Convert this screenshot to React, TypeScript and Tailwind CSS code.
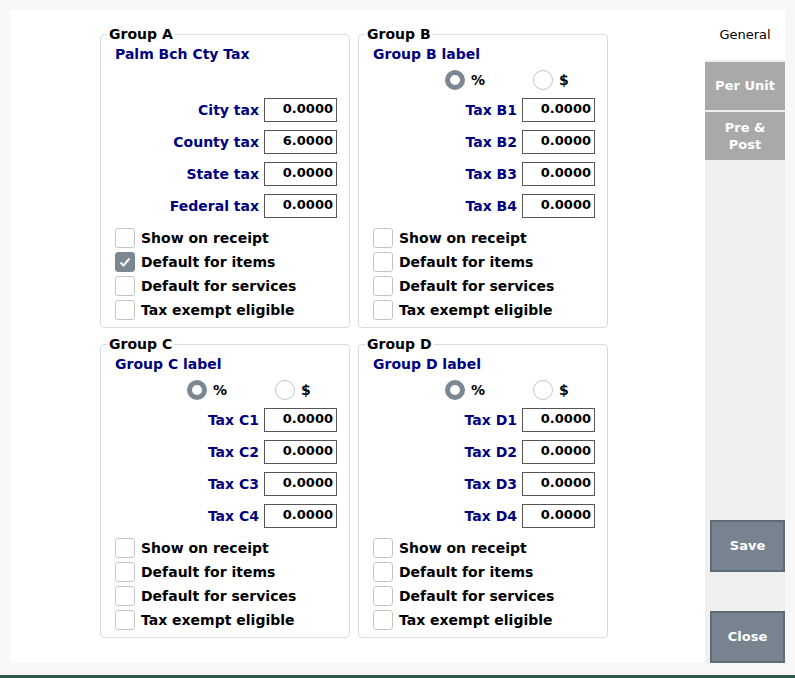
import React from "react";

const font = { fontFamily: "'DejaVu Sans', Verdana, sans-serif" };

type Group = {
  name: string;
  label: string;
  radio: boolean;
  rows: [string, string][];
  checked: boolean[];
};

const groups: Group[] = [
  {
    name: "Group A",
    label: "Palm Bch Cty Tax",
    radio: false,
    rows: [["City tax", "0.0000"], ["County tax", "6.0000"], ["State tax", "0.0000"], ["Federal tax", "0.0000"]],
    checked: [false, true, false, false],
  },
  {
    name: "Group B",
    label: "Group B label",
    radio: true,
    rows: [["Tax B1", "0.0000"], ["Tax B2", "0.0000"], ["Tax B3", "0.0000"], ["Tax B4", "0.0000"]],
    checked: [false, false, false, false],
  },
  {
    name: "Group C",
    label: "Group C label",
    radio: true,
    rows: [["Tax C1", "0.0000"], ["Tax C2", "0.0000"], ["Tax C3", "0.0000"], ["Tax C4", "0.0000"]],
    checked: [false, false, false, false],
  },
  {
    name: "Group D",
    label: "Group D label",
    radio: true,
    rows: [["Tax D1", "0.0000"], ["Tax D2", "0.0000"], ["Tax D3", "0.0000"], ["Tax D4", "0.0000"]],
    checked: [false, false, false, false],
  },
];

const checks = ["Show on receipt", "Default for items", "Default for services", "Tax exempt eligible"];

const Box = ({ checked }: { checked: boolean }) => (
  <span
    className={`w-[20px] h-[20px] rounded-[3px] border flex items-center justify-center ${
      checked ? "bg-[#7b8792] border-[#7b8792]" : "bg-white border-[#c4c4c4]"
    }`}
  >
    {checked && (
      <svg width="14" height="14" viewBox="0 0 14 14">
        <path d="M2.5 7.5 L5.5 10.5 L11.5 3.5" stroke="white" strokeWidth="2" fill="none" />
      </svg>
    )}
  </span>
);

const GroupBox = ({ g }: { g: Group }) => (
  <fieldset className="border border-[#d8dcdf] rounded-[4px] w-[250px] h-[302px] pl-[14px] pr-[12px] m-0 pt-0 pb-0">
    <legend className="px-[2px] -ml-[8px] text-[14px] font-bold text-black leading-[16px]">{g.name}</legend>
    <div className="text-[14px] font-bold text-[#000080] mt-[2px] h-[20px]">{g.label}</div>
    {g.radio ? (
      <div className="flex items-center h-[28px] mt-[2px] pl-[72px]">
        <span className="w-[20px] h-[20px] rounded-full border-[5px] border-[#7b8792] bg-white" />
        <span className="ml-[6px] text-[14px] font-bold w-[62px]">%</span>
        <span className="w-[20px] h-[20px] rounded-full border border-[#c4c4c4] bg-white" />
        <span className="ml-[6px] text-[14px] font-bold">$</span>
      </div>
    ) : (
      <div className="h-[30px]" />
    )}
    <div className="flex flex-col gap-[8px] mt-[4px]">
      {g.rows.map(([l, v]) => (
        <div key={l} className="flex items-center justify-end gap-[5px]">
          <span className="text-[14px] font-bold text-[#000080]">{l}</span>
          <span className="w-[73px] h-[24px] border border-[#555] bg-white text-[13px] font-bold text-right pr-[3px] leading-[20px]">
            {v}
          </span>
        </div>
      ))}
    </div>
    <div className="flex flex-col gap-[4px] mt-[10px]">
      {checks.map((c, i) => (
        <div key={c} className="flex items-center gap-[6px] h-[20px]">
          <Box checked={g.checked[i]} />
          <span className="text-[14px] font-bold text-black">{c}</span>
        </div>
      ))}
    </div>
  </fieldset>
);

export default function App() {
  return (
    <div style={font} className="w-[795px] h-[678px] bg-[#f7f7f7] relative overflow-hidden">
      <div className="flex pt-[10px] pl-[10px] h-[666px]">
        <div className="w-[695px] h-[653px] bg-white pl-[90px] pt-[16px]">
          <div className="grid grid-cols-[250px_250px] gap-x-[8px] gap-y-[8px]">
            {groups.map((g) => (
              <GroupBox key={g.name} g={g} />
            ))}
          </div>
        </div>
        <div className="w-[80px] h-[653px] bg-[#efefef] flex flex-col">
          <div className="h-[50px] bg-white flex items-center justify-center text-[13px] text-black">General</div>
          <div className="h-[2px]" />
          <div className="h-[48px] bg-[#a9a9a9] flex items-center justify-center text-[13px] font-bold text-white">Per Unit</div>
          <div className="h-[2px]" />
          <div className="h-[48px] bg-[#a9a9a9] flex items-center justify-center text-center text-[13px] font-bold text-white leading-[17px]">
            Pre &amp;<br />Post
          </div>
          <div className="flex-1" />
          <div className="ml-[5px] w-[75px] h-[52px] bg-[#778490] border-2 border-[#5f6b75] flex items-center justify-center text-[13px] font-bold text-white">Save</div>
          <div className="h-[39px]" />
          <div className="ml-[5px] w-[75px] h-[52px] bg-[#778490] border-2 border-[#5f6b75] flex items-center justify-center text-[13px] font-bold text-white">Close</div>
        </div>
      </div>
      <div className="absolute bottom-0 left-0 w-full h-[3px] bg-[#2f5a48]" />
    </div>
  );
}
